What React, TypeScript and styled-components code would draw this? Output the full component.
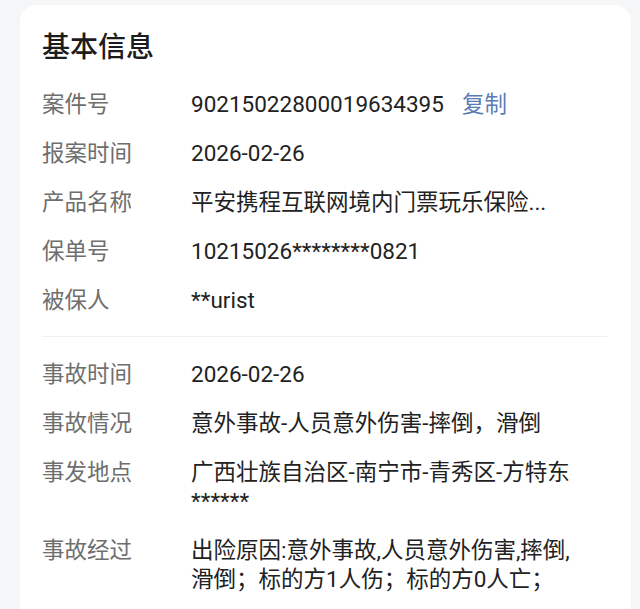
import React from "react";
import styled, { createGlobalStyle } from "styled-components";

const GlobalStyle = createGlobalStyle`
  html, body {
    margin: 0;
    padding: 0;
    background: #f5f6f8;
  }
  body {
    font-family: "Roboto", "Noto Sans CJK SC", sans-serif;
    -webkit-font-smoothing: antialiased;
  }
  * { box-sizing: border-box; }
`;

const Page = styled.div`
  padding: 5px 9px 0 20px;
  height: 609px;
  overflow: hidden;
`;

const Card = styled.section`
  background: #ffffff;
  border-radius: 16px;
  padding: 23px 24px 40px 22px;
  min-height: 640px;
`;

const Title = styled.h2`
  margin: 0 0 12px 0;
  font-size: 28px;
  line-height: 40px;
  font-weight: 500;
  color: #1c1c1c;
`;

const Group = styled.div`
  display: flex;
  flex-direction: column;
`;

const Divider = styled.div`
  height: 1px;
  background: #f0f0f0;
  margin: 11px 0 13px 0;
`;

const Row = styled.div`
  display: grid;
  grid-template-columns: 149px 396px;
  padding: 10px 0;
  font-size: 22.5px;
  line-height: 29px;
`;

const Label = styled.div`
  color: #6e6e6e;
`;

const Value = styled.div`
  color: #222222;
  word-break: normal;
`;

const CopyLink = styled.span`
  color: #5a7bb3;
  margin-left: 18px;
`;

type Item = { label: string; value: string; copy?: boolean };

const basic: Item[] = [
  { label: "案件号", value: "90215022800019634395", copy: true },
  { label: "报案时间", value: "2026-02-26" },
  { label: "产品名称", value: "平安携程互联网境内门票玩乐保险..." },
  { label: "保单号", value: "10215026********0821" },
  { label: "被保人", value: "**urist" },
];

const accident: Item[] = [
  { label: "事故时间", value: "2026-02-26" },
  { label: "事故情况", value: "意外事故-人员意外伤害-摔倒，滑倒" },
  { label: "事发地点", value: "广西壮族自治区-南宁市-青秀区-方特东******" },
  {
    label: "事故经过",
    value: "出险原因:意外事故,人员意外伤害,摔倒,滑倒；标的方1人伤；标的方0人亡；",
  },
];

const InfoRow = ({ item }: { item: Item }) => (
  <Row>
    <Label>{item.label}</Label>
    <Value>
      {item.value}
      {item.copy && <CopyLink>复制</CopyLink>}
    </Value>
  </Row>
);

export default function App() {
  return (
    <>
      <GlobalStyle />
      <Page>
        <Card>
          <Title>基本信息</Title>
          <Group>
            {basic.map((it) => (
              <InfoRow key={it.label} item={it} />
            ))}
          </Group>
          <Divider />
          <Group>
            {accident.map((it) => (
              <InfoRow key={it.label} item={it} />
            ))}
          </Group>
        </Card>
      </Page>
    </>
  );
}
